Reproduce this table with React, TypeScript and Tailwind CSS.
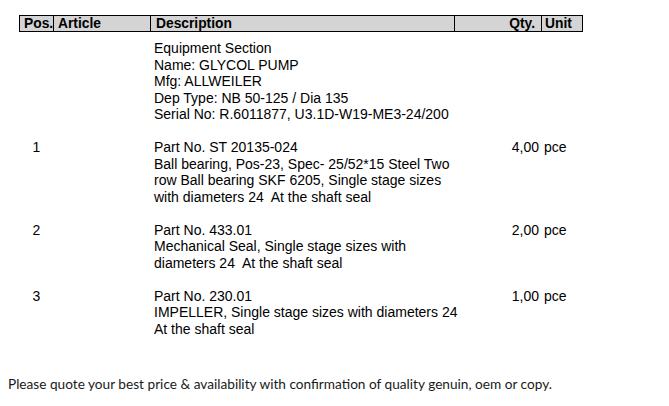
const rows = [
  {
    pos: "",
    qty: "",
    unit: "",
    lines: [
      "Equipment Section",
      "Name: GLYCOL PUMP",
      "Mfg: ALLWEILER",
      "Dep Type: NB 50-125 / Dia 135",
      "Serial No: R.6011877, U3.1D-W19-ME3-24/200",
    ],
  },
  {
    pos: "1",
    qty: "4,00",
    unit: "pce",
    lines: [
      "Part No. ST 20135-024",
      "Ball bearing, Pos-23, Spec- 25/52*15 Steel Two",
      "row Ball bearing SKF 6205, Single stage sizes",
      "with diameters 24\u00a0 At the shaft seal",
    ],
  },
  {
    pos: "2",
    qty: "2,00",
    unit: "pce",
    lines: [
      "Part No. 433.01",
      "Mechanical Seal, Single stage sizes with",
      "diameters 24\u00a0 At the shaft seal",
    ],
  },
  {
    pos: "3",
    qty: "1,00",
    unit: "pce",
    lines: [
      "Part No. 230.01",
      "IMPELLER, Single stage sizes with diameters 24",
      "At the shaft seal",
    ],
  },
]

export default function App() {
  return (
    <div className="w-[669px] h-[406px] bg-white text-black overflow-hidden pt-[15px] font-['Liberation_Sans',Arial,sans-serif]">
      <div className="ml-[19px] w-[564px]">
        {/* header bar */}
        <div className="grid grid-cols-[33px_97px_304px_87px_41px] border border-black bg-[#d4d4d4] text-[13.8px] leading-[15px] font-bold">
          <div className="pl-[4px]">Pos.</div>
          <div className="border-l border-black pl-[4px]">Article</div>
          <div className="border-l border-black pl-[5px]">Description</div>
          <div className="border-l border-black pr-[6px] text-right">Qty.</div>
          <div className="border-l border-black pl-[3px]">Unit</div>
        </div>

        <div className="pt-[8px] text-[14px] leading-[16.5px]">
          {rows.map((row, i) => (
            <div
              key={i}
              className="grid grid-cols-[34px_97px_304px_87px_41px] pb-[16.5px]"
            >
              <div className="text-center pl-[1px]">{row.pos}</div>
              <div />
              <div className="pl-[4px] whitespace-pre">
                {row.lines.map((l, j) => (
                  <div key={j}>{l}</div>
                ))}
              </div>
              <div className="text-right pr-[2px]">{row.qty}</div>
              <div className="pl-[3px]">{row.unit}</div>
            </div>
          ))}
        </div>
      </div>

      <p className="mt-[20px] pl-[8px] text-[13.65px] font-['Lato',sans-serif] text-[#1a1a1a]">
        Please quote your best price &amp; availability with confirmation of quality genuin, oem or copy.
      </p>
    </div>
  )
}
